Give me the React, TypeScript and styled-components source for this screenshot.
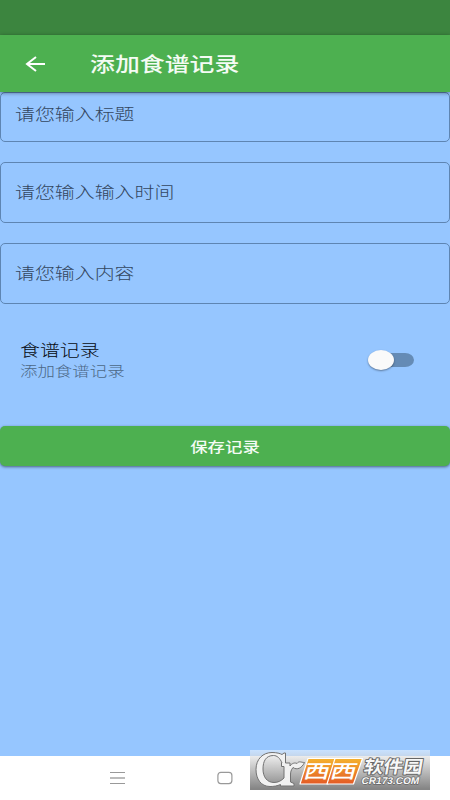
import React, { useState } from "react";
import styled, { createGlobalStyle } from "styled-components";

const GlobalStyle = createGlobalStyle`
  * { box-sizing: border-box; }
  body { margin: 0; background: #fff; font-family: "Noto Sans CJK SC", sans-serif; }
`;

const Screen = styled.div`
  width: 450px;
  height: 800px;
  display: flex;
  flex-direction: column;
  overflow: hidden;
  background: #fff;
`;

const StatusBar = styled.div`
  flex: none;
  height: 35px;
  background: #3c853f;
`;

const AppBar = styled.header`
  flex: none;
  height: 57px;
  display: flex;
  align-items: center;
  padding: 0 0 0 24px;
  gap: 44px;
  background: #4db050;
  position: relative;
  z-index: 1;
  box-shadow: 0 1px 4px rgba(0, 0, 0, 0.45);
`;

const Wide = styled.span<{ $size: number; $weight?: number; $color: string; $center?: boolean }>`
  display: block;
  white-space: nowrap;
  font-size: ${(p) => p.$size}px;
  line-height: ${(p) => p.$size * 1.25}px;
  font-weight: ${(p) => p.$weight ?? 300};
  color: ${(p) => p.$color};
  transform: scaleX(1.245);
  transform-origin: ${(p) => (p.$center ? "center" : "left")};
`;

const Body = styled.main`
  flex: none;
  height: 664px;
  background: #96c6ff;
`;

const Field = styled.div<{ $cut?: boolean }>`
  height: ${(p) => (p.$cut ? 50 : 61)}px;
  margin-bottom: 20px;
  padding: 0 14px ${(p) => (p.$cut ? 8 : 3)}px;
  display: flex;
  align-items: center;
  border: 1px solid #5e85b2;
  border-radius: 5px;
`;

const SwitchRow = styled.div`
  height: 102px;
  display: flex;
  align-items: flex-start;
  justify-content: space-between;
  padding: 15px 36px 0 20px;
`;

const Labels = styled.div`
  display: flex;
  flex-direction: column;
  gap: 3px;
`;

const Track = styled.button`
  width: 41px;
  height: 14px;
  margin-top: 14px;
  padding: 0;
  border: 0;
  border-radius: 9px / 7px;
  background: #658bb5;
  display: flex;
  align-items: center;
`;

const Thumb = styled.span<{ $on: boolean }>`
  flex: none;
  width: 26px;
  height: 20px;
  margin-left: ${(p) => (p.$on ? 19 : -5)}px;
  border-radius: 50%;
  background: #fafafa;
  box-shadow: 0 1px 2px rgba(0, 0, 0, 0.4);
`;

const SaveButton = styled.button`
  width: 100%;
  height: 40px;
  padding: 2px 0 0;
  border: 0;
  border-radius: 5px;
  background: #4db050;
  display: flex;
  align-items: center;
  justify-content: center;
  font-family: inherit;
  box-shadow: 0 1px 3px rgba(0, 0, 0, 0.5);
`;

const NavBar = styled.nav`
  flex: none;
  height: 44px;
  display: flex;
  align-items: flex-start;
  background: #fff;
`;

const NavIcons = styled.div`
  width: 250px;
  padding: 15px 0 0 110px;
  display: flex;
  gap: 92px;
`;

const Watermark = styled.div`
  width: 180px;
  height: 40px;
  margin-top: -6px;
  display: flex;
  background: linear-gradient(rgba(255, 255, 255, 0.48), rgba(200, 200, 200, 0.8) 35%, #858585 97%);
`;

function BackIcon() {
  return (
    <svg width="22" height="18" viewBox="0 0 22 18" fill="none" stroke="#fff" strokeWidth="2">
      <path d="M21 9H3M12 2L3 9L12 16" />
    </svg>
  );
}

function Logo() {
  return (
    <svg width="180" height="40" viewBox="0 0 180 40">
      <defs>
        <linearGradient id="fire" x1="0" y1="0" x2="0" y2="1">
          <stop offset="0" stopColor="#f5b22e" />
          <stop offset="1" stopColor="#e35a25" />
        </linearGradient>
      </defs>
      <path
        d="M35.5 3V13H40V16C42 13 45 12.5 47 13.5C49 10.5 51 12.5 54.5 12.5C52 18 47 20.5 43 17.5C41 20 40.5 22 40.5 25V32L44 33.5V36H30.5V34.5C27 36 24 36.5 20 36.5C11 36.5 6 29 6 19.5C6 9 13 2.5 22 2.5C27 2.5 30 3.5 32 4.5L34 3ZM32 13C30 8 27 5.5 23.5 5.5C16 5.5 13 11 13 19C13 27 17 32.5 24 32.5C28 32.5 31 31 34 28V16.5H31.5V13Z"
        fill="#f1f1f1"
        fillRule="evenodd"
        stroke="#727272"
        strokeWidth="1"
        strokeLinejoin="round"
      />
      <g fill="url(#fire)" stroke="#fff" strokeWidth="1.2" strokeLinejoin="round">
        <path d="M58 8.5H86L78 34H50Z" />
        <path d="M85 8.5H112.5L103.5 34H77Z" />
      </g>
      <g
        fill="#fff"
        fontFamily="Noto Sans CJK SC, sans-serif"
        fontWeight="500"
        fontSize="19"
      >
        <text transform="translate(52.5 28.3) skewX(-15) scale(1.38 1)">西</text>
        <text transform="translate(79 28.3) skewX(-15) scale(1.38 1)">西</text>
      </g>
      <g fill="#f8f8f8" stroke="#666" paintOrder="stroke" strokeLinejoin="round">
        <text
          transform="translate(113 23) skewX(-10) scale(1.12 1)"
          fontFamily="Noto Sans CJK SC, sans-serif"
          fontWeight="700"
          fontSize="17.5"
          strokeWidth="1.8"
        >
          软件园
        </text>
        <text
          transform="translate(111 33.5) skewX(-12) scale(1.03 1)"
          fontFamily="Liberation Sans, sans-serif"
          fontWeight="700"
          fontSize="9.8"
          strokeWidth="1.3"
        >
          CR173.COM
        </text>
      </g>
    </svg>
  );
}

export default function App() {
  const [on, setOn] = useState(false);
  return (
    <>
      <GlobalStyle />
      <Screen>
        <StatusBar />
        <AppBar>
          <BackIcon />
          <Wide $size={20} $weight={500} $color="#f4fbf4">添加食谱记录</Wide>
        </AppBar>
        <Body>
          <Field $cut><Wide $size={16} $color="#33475f">请您输入标题</Wide></Field>
          <Field><Wide $size={16} $color="#33475f">请您输入输入时间</Wide></Field>
          <Field><Wide $size={16} $color="#33475f">请您输入内容</Wide></Field>
          <SwitchRow>
            <Labels>
              <Wide $size={16} $color="#060a10">食谱记录</Wide>
              <Wide $size={14} $color="#4c6887">添加食谱记录</Wide>
            </Labels>
            <Track role="switch" aria-checked={on} onClick={() => setOn(!on)}>
              <Thumb $on={on} />
            </Track>
          </SwitchRow>
          <SaveButton><Wide $size={14} $weight={500} $color="#f4fbf4" $center>保存记录</Wide></SaveButton>
        </Body>
        <NavBar>
          <NavIcons>
            <svg width="15" height="14" viewBox="0 0 15 14" stroke="#999" strokeWidth="1">
              <path d="M0 1.5H15M0 12.5H15" />
              <path d="M0 7H15" stroke="#bbb" strokeWidth="2" />
            </svg>
            <svg width="16" height="14" viewBox="0 0 16 14" fill="none" stroke="#999">
              <rect x="0.9" y="1.4" width="14" height="11.2" rx="3" strokeWidth="1.2" />
            </svg>
          </NavIcons>
          <Watermark><Logo /></Watermark>
        </NavBar>
      </Screen>
    </>
  );
}
